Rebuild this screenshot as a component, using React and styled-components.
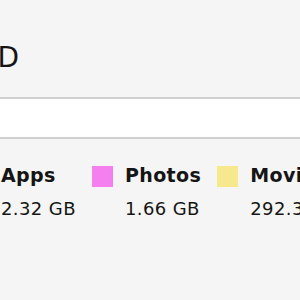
import React from 'react'
import styled, { createGlobalStyle } from 'styled-components'

const GlobalStyle = createGlobalStyle`
	html, body {
		margin: 0;
		padding: 0;
		background: #f5f5f5;
		overflow: hidden;
	}
	body {
		font-family: 'DejaVu Sans', 'Liberation Sans', sans-serif;
		color: #151515;
	}
`

const Page = styled.div`
	width: 300px;
	height: 300px;
	overflow: hidden;
`

const TitleRow = styled.div`
	width: 19px;
	margin-top: 44px;
	display: flex;
	justify-content: flex-end;
	white-space: nowrap;
`

const Title = styled.h1`
	margin: 0;
	font-size: 28px;
	line-height: 28px;
	font-weight: normal;
	flex-shrink: 0;
`

const UsageBar = styled.div`
	margin-top: 25px;
	height: 38px;
	background: #ffffff;
	border-top: 2px solid #d0d0d0;
	border-bottom: 2px solid #d0d0d0;
`

const Legend = styled.div`
	margin-top: 25px;
	margin-left: -32px;
	display: flex;
	gap: 16px;
	white-space: nowrap;
`

const Item = styled.div`
	display: flex;
	gap: 12px;
	flex-shrink: 0;
`

const Swatch = styled.div`
	width: 21px;
	height: 21px;
	margin-top: 2px;
	background: ${props => props.color};
`

const Label = styled.div`
	font-size: 19px;
	line-height: 22px;
	font-weight: bold;
	letter-spacing: 0.4px;
`

const Size = styled.div`
	margin-top: 13px;
	font-size: 18px;
	line-height: 20px;
	letter-spacing: 0.4px;
`

const categories = [
	{ name: 'Apps', size: '2.32 GB', color: '#7fb6f4' },
	{ name: 'Photos', size: '1.66 GB', color: '#f67ff0' },
	{ name: 'Movies', size: '292.3 MB', color: '#f7e78d' },
]

export default function App() {
	return (
		<Page>
			<GlobalStyle />
			<TitleRow>
				<Title>Macintosh HD</Title>
			</TitleRow>
			<UsageBar />
			<Legend>
				{categories.map(item => (
					<Item key={item.name}>
						<Swatch color={item.color} />
						<div>
							<Label>{item.name}</Label>
							<Size>{item.size}</Size>
						</div>
					</Item>
				))}
			</Legend>
		</Page>
	)
}
